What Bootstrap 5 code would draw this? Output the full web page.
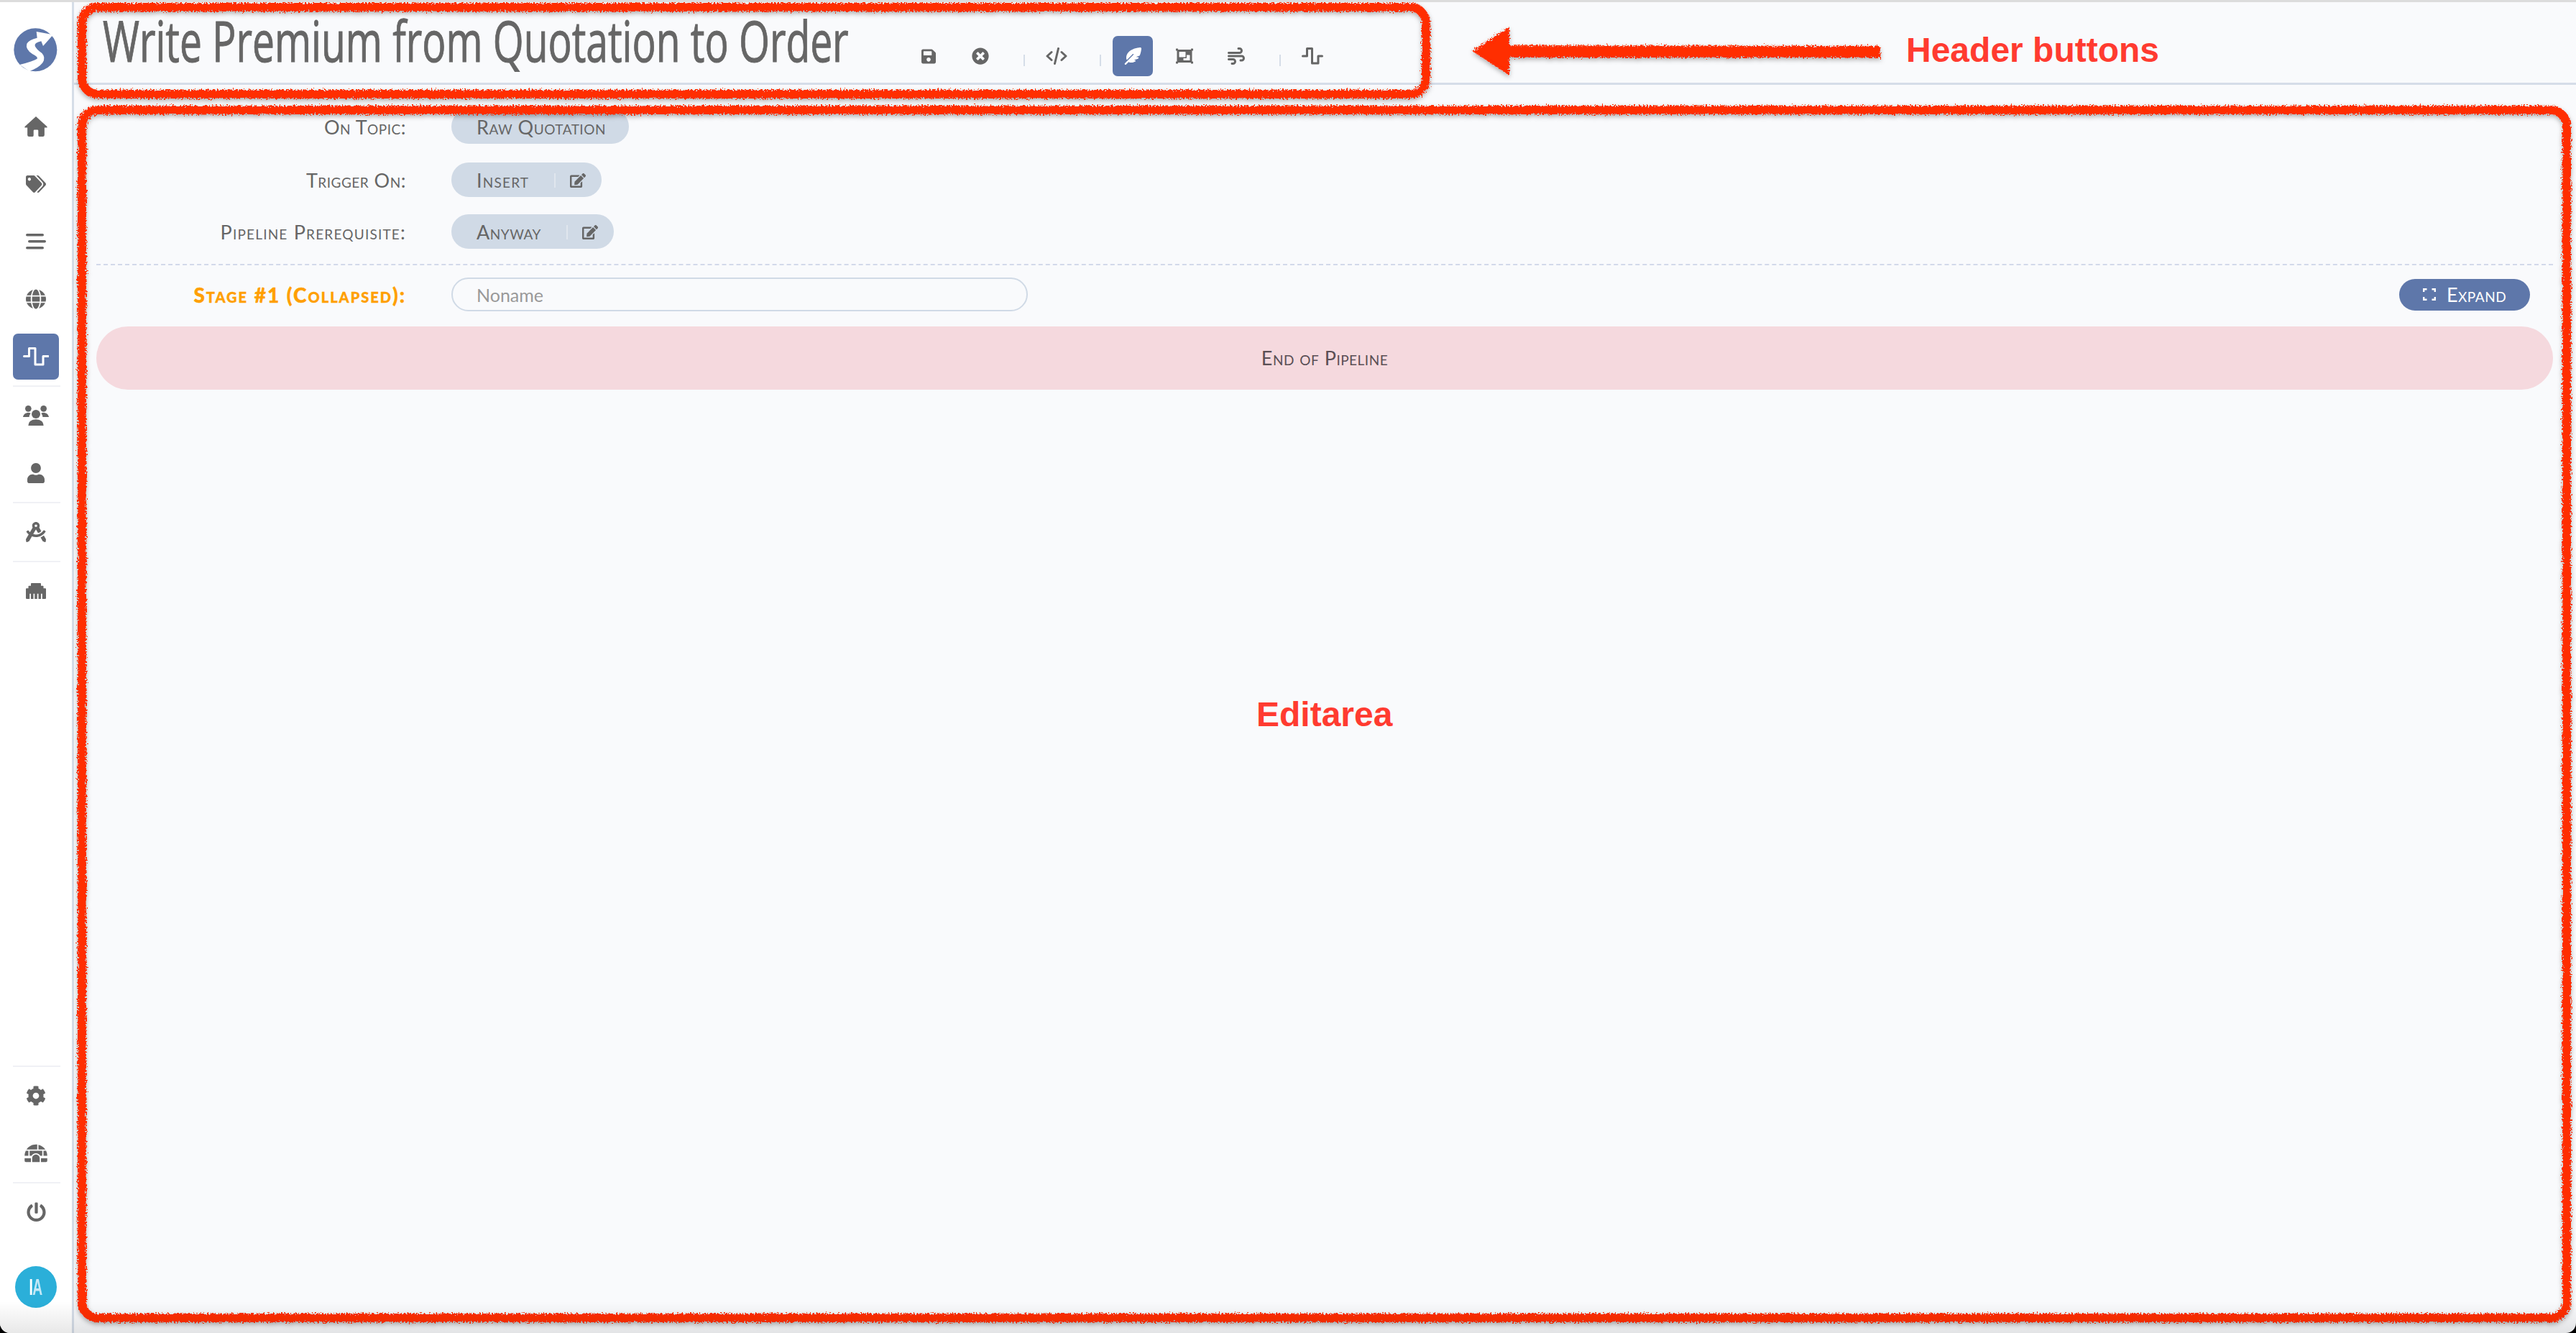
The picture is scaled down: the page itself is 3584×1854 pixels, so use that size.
<!DOCTYPE html>
<html lang="en">
<head>
<meta charset="utf-8">
<title>Write Premium from Quotation to Order</title>
<link href="https://cdn.jsdelivr.net/npm/bootstrap@5.3.0/dist/css/bootstrap.min.css" rel="stylesheet">
<script src="https://cdn.jsdelivr.net/npm/bootstrap@5.3.0/dist/js/bootstrap.bundle.min.js"></script>
<style>
html,body{margin:0;height:1854px;background:#000;overflow:hidden}
.app-shell{position:relative;width:3584px;height:1854px;background:#f9fafc;border-top:3px solid #dcdcdc;border-radius:0 0 14px 14px;overflow:hidden;font-family:"Lato","Liberation Sans",sans-serif;color:#666}
.app-shell::after{content:"";position:absolute;left:0;right:0;bottom:0;height:44px;background:linear-gradient(to bottom,rgba(0,0,0,0),rgba(0,0,0,.09));pointer-events:none}
.side-rail{width:103px;flex:0 0 103px;background:#fff;border-right:3px solid #d5dde8;padding:0 17px 0 18px}
.side-logo{margin:27px 0 34px -8px;display:block}
.side-item{width:64px;height:64px;border-radius:7px;color:#666;flex:0 0 64px}
.side-item.is-on{background:#5e77aa;color:#fff}
.side-gap{margin-bottom:16px}
.side-rule{height:2px;width:66px;background:#f0f1f5;margin:8px 0;flex:0 0 2px}
.side-avatar{width:58px;height:58px;border-radius:50%;background:#2bafd9;margin:43px 0 35px 3px;font-family:"Liberation Sans",sans-serif;font-weight:700;font-size:31px;letter-spacing:-1px;color:#fff;line-height:1}
.ava-text{display:inline-block;transform:scaleX(.62)}
.ava-text span{color:#c4e8f6}
.top-bar{height:115px;border-bottom:3px solid #d5dde8;padding-left:40px;flex:0 0 115px}
.page-title{width:1121px;font-family:"Open Sans","Liberation Sans",sans-serif;font-size:79px;line-height:1;color:#666;margin:0;font-weight:400;white-space:nowrap;padding-top:13px}
.title-text{display:inline-block;transform:scaleX(.698);transform-origin:left center;-webkit-text-stroke:1px #666}
.tool-btn{width:56px;height:56px;border-radius:7px;color:#666;margin:47px 16px 0 0;padding:0;flex:0 0 56px}
.tool-btn.is-on{background:#5e77aa;color:#fff}
.tool-rule{width:2px;height:16px;background:#d5dde8;margin:73px 16px 0 16px;flex:0 0 2px}
.edit-area{padding:34px 32px 0 31px}
.form-line{display:grid;grid-template-columns:431px auto;column-gap:63px;align-items:center;margin-bottom:24px;height:48px;font-variant:small-caps;font-size:27px;letter-spacing:.5px}
.form-line.first-line{margin-bottom:26px}
.form-line label{text-align:right;margin:0;color:#666;padding-top:2px}
.form-line label.wide-label{letter-spacing:1.2px}
.pill-val{height:48px;background:#d0dae6;border-radius:24px;padding:2px 22px 0 35px;justify-self:start;color:#666}
.pill-val.no-edit{padding-right:32px}
.pill-val.wide-val{letter-spacing:1.2px}
.pill-rule{width:2px;height:20px;background:#e0e6ee;margin:0 20px 0 35px}
.dash-line{border-top:2px dashed #d2d9ea;margin-bottom:17px;margin-top:-3px}
.stage-line{display:grid;grid-template-columns:431px 802px 1fr;column-gap:63px;align-items:center;height:47px;margin-bottom:21px}
.stage-line label{text-align:right;font-variant:small-caps;font-weight:900;font-size:28px;letter-spacing:2px;color:#ff9f00;margin:0;-webkit-text-stroke:.4px #ff9f00}
.name-input{height:47px;border:2px solid #d0dae6;border-radius:24px;background:transparent;font-size:25px;padding:0 33px;box-shadow:none;color:#666}
.name-input::placeholder{color:#999}
.expand-btn{justify-self:end;grid-column:3;width:182px;height:44px;margin-right:32px;border:0;border-radius:22px;background:#5e77aa;color:#fff;font-variant:small-caps;font-size:27px;letter-spacing:.5px;padding:0;gap:15px;line-height:1}
.pipe-end{height:88px;border-radius:44px;background:#f5d9de;color:#5a4f55;font-variant:small-caps;font-size:27px;letter-spacing:.5px}
.note-layer{position:absolute;left:0;top:-3px;pointer-events:none}
.note-text{position:absolute;font-family:"Liberation Sans",sans-serif;font-weight:700;font-size:48px;line-height:1;color:#ff3b30;white-space:nowrap}
.note-a{left:2652px;top:43px}
.note-b{left:1748px;top:967px}
</style>
</head>
<body>
<div class="app-shell d-flex">
  <nav class="side-rail d-flex flex-column">
    <svg class="side-logo" width="80" height="80" viewBox="0 0 240 240"><circle cx="118" cy="118" r="90" fill="#5e77aa"/><path fill="#fff" d="M122 42L192 55L150 102L142 82Q112 88 116 102Q122 116 145 132Q162 150 148 172Q130 195 92 207L52 180Q110 165 125 155Q130 148 105 135Q75 115 82 92Q92 75 125 68Z"/></svg>
    <a class="side-item side-gap d-flex align-items-center justify-content-center"><svg width="32" height="28" viewBox="0 0 96 85" fill="currentColor"><path d="M48 0L94 42Q98 47 92 47L84 47L84 78Q84 85 77 85L62 85Q58 85 58 80L58 60Q58 56 54 56L42 56Q38 56 38 60L38 80Q38 85 34 85L19 85Q12 85 12 78L12 47L4 47Q-2 47 2 42Z"/></svg></a>
    <a class="side-item side-gap d-flex align-items-center justify-content-center"><svg width="28" height="24" viewBox="0 0 640 512" preserveAspectRatio="none" fill="currentColor"><path d="M497.941 225.941L286.059 14.059A48 48 0 0 0 252.118 0H48C21.49 0 0 21.49 0 48v204.118a48 48 0 0 0 14.059 33.941l211.882 211.882c18.744 18.745 49.136 18.746 67.882 0l204.118-204.118c18.745-18.745 18.745-49.137 0-67.882zM112 160c-26.51 0-48-21.49-48-48s21.49-48 48-48 48 21.49 48 48-21.49 48-48 48zm513.941 133.823L421.823 497.941c-18.745 18.745-49.137 18.745-67.882 0l-.36-.36L527.64 323.522c16.999-16.999 26.36-39.6 26.36-63.64s-9.362-46.641-26.36-63.64L331.397 0h48.721a48 48 0 0 1 33.941 14.059l211.882 211.882c18.745 18.745 18.745 49.137 0 67.882z"/></svg></a>
    <a class="side-item side-gap d-flex align-items-center justify-content-center"><svg width="28" height="22" viewBox="0 0 28 22" fill="currentColor"><rect x="0" y="0" width="25" height="3.6" rx="1.8"/><rect x="3" y="9" width="25" height="3.6" rx="1.8"/><rect x="0" y="18" width="25" height="3.6" rx="1.8"/></svg></a>
    <a class="side-item side-gap d-flex align-items-center justify-content-center"><svg width="28" height="28" viewBox="0 0 496 512" fill="currentColor" preserveAspectRatio="none"><path d="M336.5 160C322 70.7 287.8 8 248 8s-74 62.7-88.5 152h177zM152 256c0 22.2 1.2 43.5 3.3 64h185.3c2.1-20.5 3.3-41.8 3.3-64s-1.2-43.5-3.3-64H155.3c-2.1 20.5-3.3 41.8-3.3 64zm324.7-96c-28.6-67.9-86.5-120.4-158-141.6 24.4 33.8 41.2 84.7 50 141.6h108zM177.2 18.4C105.8 39.6 47.8 92.1 19.3 160h108c8.7-56.9 25.5-107.8 49.9-141.6zM487.4 192H372.7c2.1 21 3.3 42.5 3.3 64s-1.2 43-3.3 64h114.6c5.5-20.5 8.6-41.8 8.6-64s-3.1-43.5-8.5-64zM120 256c0-21.5 1.2-43 3.3-64H8.6C3.2 212.5 0 233.8 0 256s3.2 43.5 8.6 64h114.6c-2-21-3.2-42.5-3.2-64zm39.5 96c14.5 89.3 48.7 152 88.5 152s74-62.7 88.5-152h-177zm159.3 141.6c71.4-21.2 129.4-73.7 158-141.6h-108c-8.8 56.9-25.6 107.8-50 141.6zM19.3 352c28.6 67.9 86.5 120.4 158 141.6-24.4-33.8-41.2-84.7-50-141.6h-108z"/></svg></a>
    <a class="side-item is-on d-flex align-items-center justify-content-center"><svg width="36" height="26" viewBox="0 0 36 26" fill="none" stroke="currentColor" stroke-width="3" stroke-linecap="round" stroke-linejoin="round"><path d="M1.5 12.5H8.5V1.5H17V24H28V12.5H35"/></svg></a>
    <div class="side-rule"></div>
    <a class="side-item side-gap d-flex align-items-center justify-content-center"><svg width="36" height="28" viewBox="0 0 108 84" fill="currentColor"><circle cx="22" cy="13" r="13"/><circle cx="86" cy="13" r="13"/><circle cx="54" cy="36" r="18"/><path d="M0 48C2 36 12 30 22 30C26 30 30 31 32 33C28 38 26 42 26 48Z"/><path d="M108 48C106 36 96 30 86 30C82 30 78 31 76 33C80 38 82 42 82 48Z"/><path d="M22 84Q22 60 54 58Q86 60 86 84Z"/></svg></a>
    <a class="side-item d-flex align-items-center justify-content-center"><svg width="24" height="28" viewBox="0 0 448 512" preserveAspectRatio="none" fill="currentColor"><path d="M224 256c70.7 0 128-57.3 128-128S294.7 0 224 0 96 57.3 96 128s57.3 128 128 128zm89.6 32h-16.7c-22.2 10.2-46.9 16-72.9 16s-50.6-5.8-72.9-16h-16.7C60.2 288 0 348.2 0 422.4V464c0 26.5 21.5 48 48 48h352c26.5 0 48-21.5 48-48v-41.6c0-74.2-60.2-134.4-134.4-134.4z"/></svg></a>
    <div class="side-rule"></div>
    <a class="side-item d-flex align-items-center justify-content-center"><svg width="28" height="28" viewBox="0 0 512 512" fill="currentColor"><path d="M457.01 344.42c-25.05 20.33-52.63 37.18-82.54 49.05l54.38 94.19 53.95 23.04c9.81 4.19 20.89-2.21 22.17-12.8l7.02-58.25-54.98-95.23zm42.49-94.56c4.86-7.67 1.89-17.99-6.05-22.39l-28.07-15.57c-7.48-4.15-16.61-1.46-21.26 5.72C403.01 281.15 332.25 320 256 320c-23.93 0-47.23-4.25-69.41-11.53l67.36-116.68c.7.02 1.34.21 2.04.21s1.35-.19 2.04-.21l51.09 88.5c31.23-8.96 59.56-25.75 82.61-48.92l-51.79-89.71C347.39 128.03 352 112.63 352 96c0-53.02-42.98-96-96-96s-96 42.98-96 96c0 16.63 4.61 32.03 12.05 45.66l-68.3 118.31c-12.55-11.61-23.96-24.59-33.68-39-4.79-7.1-13.97-9.62-21.38-5.33l-27.75 16.07c-7.85 4.54-10.63 14.9-5.64 22.47 15.57 23.64 34.69 44.21 55.98 62.02L0 439.66l7.02 58.25c1.28 10.59 12.36 16.99 22.17 12.8l53.95-23.04 70.8-122.63C186.13 377.28 220.62 384 256 384c99.05 0 190.88-51.01 243.5-134.14zM256 64c17.67 0 32 14.33 32 32s-14.33 32-32 32-32-14.33-32-32 14.33-32 32-32z"/></svg></a>
    <div class="side-rule"></div>
    <a class="side-item d-flex align-items-center justify-content-center"><svg width="28" height="22" viewBox="0 0 512 384" preserveAspectRatio="none" fill="currentColor"><path transform="translate(0,-64)" d="M496 192h-48v-48c0-8.8-7.2-16-16-16h-48V80c0-8.8-7.2-16-16-16H144c-8.8 0-16 7.2-16 16v48H80c-8.8 0-16 7.2-16 16v48H16c-8.8 0-16 7.2-16 16v224c0 8.8 7.2 16 16 16h80V320h32v128h64V320h32v128h64V320h32v128h64V320h32v128h80c8.8 0 16-7.2 16-16V208c0-8.8-7.2-16-16-16z"/></svg></a>
    <div class="side-rule mt-auto"></div>
    <a class="side-item side-gap d-flex align-items-center justify-content-center"><svg width="28" height="28" viewBox="0 0 512 512" fill="currentColor"><path d="M487.4 315.7l-42.6-24.6c4.3-23.2 4.3-47 0-70.2l42.6-24.6c4.9-2.8 7.1-8.6 5.5-14-11.1-35.6-30-67.8-54.7-94.6-3.8-4.1-10-5.1-14.8-2.3L380.8 110c-17.9-15.4-38.5-27.3-60.8-35.1V25.8c0-5.6-3.9-10.5-9.4-11.7-36.7-8.2-74.3-7.8-109.2 0-5.5 1.2-9.4 6.1-9.4 11.7V75c-22.2 7.9-42.8 19.8-60.8 35.1L88.7 85.5c-4.9-2.8-11-1.9-14.8 2.3-24.7 26.7-43.6 58.9-54.7 94.6-1.7 5.4.6 11.2 5.5 14L67.3 221c-4.3 23.2-4.3 47 0 70.2l-42.6 24.6c-4.9 2.8-7.1 8.6-5.5 14 11.1 35.6 30 67.8 54.7 94.6 3.8 4.1 10 5.1 14.8 2.3l42.6-24.6c17.9 15.4 38.5 27.3 60.8 35.1v49.2c0 5.6 3.9 10.5 9.4 11.7 36.7 8.2 74.3 7.8 109.2 0 5.5-1.2 9.4-6.1 9.4-11.7v-49.2c22.2-7.9 42.8-19.8 60.8-35.1l42.6 24.6c4.9 2.8 11 1.9 14.8-2.3 24.7-26.7 43.6-58.9 54.7-94.6 1.5-5.5-.7-11.3-5.6-14.1zM256 336c-44.1 0-80-35.9-80-80s35.9-80 80-80 80 35.9 80 80-35.9 80-80 80z"/></svg></a>
    <a class="side-item d-flex align-items-center justify-content-center"><svg width="32" height="28" viewBox="0 0 576 512" fill="currentColor"><path d="M320 33.9c-10.5-1.2-21.2-1.9-32-1.9-99.8 0-187.8 50.8-239.4 128H320V33.9zM96 192H30.3C11.1 230.6 0 274 0 320h96V192zM352 39.4V160h175.4C487.2 99.9 424.8 55.9 352 39.4zM480 320h96c0-46-11.1-89.4-30.3-128H480v128zm-64 64v96h128c17.7 0 32-14.3 32-32v-64H416zm32-192H128v128h49.8c22.2-38.1 63-64 110.2-64s88 25.9 110.2 64H448V192zM0 448c0 17.7 14.3 32 32 32h128v-96H0v64zm288-160c-53 0-96 43-96 96v96h192v-96c0-53-43-96-96-96z"/></svg></a>
    <div class="side-rule"></div>
    <a class="side-item d-flex align-items-center justify-content-center"><svg width="27" height="28" viewBox="0 0 512 512" fill="currentColor"><path d="M400 54.1c63 45 104 118.6 104 201.9 0 136.8-110.8 247.7-247.5 248C120 504.3 8.2 393 8 256.4 7.9 173.1 48.9 99.3 111.8 54.2c11.7-8.3 28-4.8 35 7.7L162.6 90c5.9 10.5 3.1 23.8-6.6 31-41.5 30.8-68 79.6-68 134.9-.1 92.3 74.5 168.1 168 168.1 91.6 0 168.6-74.2 168-169.1-.3-51.8-24.7-101.8-68.1-134-9.7-7.2-12.4-20.5-6.5-30.9l15.8-28.1c7-12.4 23.2-16.1 34.8-7.8zM296 264V24c0-13.3-10.7-24-24-24h-32c-13.3 0-24 10.7-24 24v240c0 13.3 10.7 24 24 24h32c13.3 0 24-10.7 24-24z"/></svg></a>
    <div class="side-avatar d-flex align-items-center justify-content-center"><span class="ava-text">I<span>A</span></span></div>
  </nav>
  <main class="flex-grow-1 d-flex flex-column">
    <header class="top-bar d-flex">
      <h1 class="page-title"><span class="title-text">Write Premium from Quotation to Order</span></h1>
      <a class="tool-btn d-flex align-items-center justify-content-center"><svg width="20" height="23" viewBox="0 0 448 512" fill="currentColor"><path d="M433.941 129.941l-83.882-83.882A48 48 0 0 0 316.118 32H48C21.49 32 0 53.49 0 80v352c0 26.51 21.49 48 48 48h352c26.51 0 48-21.49 48-48V163.882a48 48 0 0 0-14.059-33.941zM224 416c-35.346 0-64-28.654-64-64 0-35.346 28.654-64 64-64s64 28.654 64 64c0 35.346-28.654 64-64 64zm96-304.52V212c0 6.627-5.373 12-12 12H76c-6.627 0-12-5.373-12-12V108c0-6.627 5.373-12 12-12h228.52c3.183 0 6.235 1.264 8.485 3.515l3.48 3.48A11.996 11.996 0 0 1 320 111.48z"/></svg></a>
      <a class="tool-btn d-flex align-items-center justify-content-center"><svg width="24" height="24" viewBox="0 0 512 512" fill="currentColor"><path d="M256 8C119 8 8 119 8 256s111 248 248 248 248-111 248-248S393 8 256 8zm121.6 313.1c4.7 4.7 4.7 12.3 0 17L338 377.6c-4.7 4.7-12.3 4.7-17 0L256 312l-65.1 65.6c-4.7 4.7-12.3 4.7-17 0L134.4 338c-4.7-4.7-4.7-12.3 0-17l65.6-65-65.6-65.1c-4.7-4.7-4.7-12.3 0-17l39.6-39.6c4.7-4.7 12.3-4.7 17 0l65 65.7 65.1-65.6c4.7-4.7 12.3-4.7 17 0l39.6 39.6c4.7 4.7 4.7 12.3 0 17L312 256l65.6 65.1z"/></svg></a>
      <span class="tool-rule ms-3"></span>
      <a class="tool-btn d-flex align-items-center justify-content-center"><svg width="30" height="24" viewBox="0 0 30 24" fill="none" stroke="currentColor" stroke-width="3" stroke-linecap="round" stroke-linejoin="round"><path d="M8 6.5L2 12L8 17.5M22 6.5L28 12L22 17.5M17.5 1.5L12.5 22.5"/></svg></a>
      <span class="tool-rule ms-3"></span>
      <a class="tool-btn is-on d-flex align-items-center justify-content-center"><svg width="24" height="24" viewBox="0 0 512 512" fill="currentColor"><path d="M278.5 215.6L23 471c-9.4 9.4-9.4 24.6 0 33.9s24.6 9.4 33.9 0l74.8-74.8c7.4 4.6 15.3 8.2 23.8 10.5C200.3 452.8 270 454.5 338 409.4c12.2-8.1 5.8-25.4-8.8-25.4l-16.1 0c-5.1 0-9.2-4.1-9.2-9.2c0-4.1 2.7-7.6 6.5-8.8l97.7-29.3c3.4-1 6.4-3.1 8.4-6.1c4.4-6.4 8.6-12.9 12.6-19.6c6.2-10.3-1.5-23-13.5-23l-38.6 0c-5.1 0-9.2-4.1-9.2-9.2c0-4.1 2.7-7.6 6.5-8.8l80.9-24.3c4.6-1.4 8.4-4.8 10.2-9.3C494.5 163 507.8 86.1 511.9 36.8c.8-9.9-3-19.6-10-26.6s-16.7-10.8-26.6-10C391.5 7 228.5 40.5 137.4 131.6C57.3 211.7 56.7 302.3 71.3 356.4c2.1 7.9 12 9.6 17.8 3.8L253.6 195.8c6.2-6.2 16.4-6.2 22.6 0c5.2 5.2 6.1 13.2 2.3 19.3z"/></svg></a>
      <a class="tool-btn d-flex align-items-center justify-content-center"><svg width="24" height="24" viewBox="0 0 512 512" fill="currentColor"><path d="M480 128V96h20c6.627 0 12-5.373 12-12V44c0-6.627-5.373-12-12-12H460c-6.627 0-12 5.373-12 12v20H64V44c0-6.627-5.373-12-12-12H12C5.373 32 0 37.373 0 44v40c0 6.627 5.373 12 12 12h20v320H12c-6.627 0-12 5.373-12 12v40c0 6.627 5.373 12 12 12h40c6.627 0 12-5.373 12-12v-20h384v20c0 6.627 5.373 12 12 12h40c6.627 0 12-5.373 12-12v-40c0-6.627-5.373-12-12-12h-20V128zM96 276V140c0-6.627 5.373-12 12-12h168c6.627 0 12 5.373 12 12v136c0 6.627-5.373 12-12 12H108c-6.627 0-12-5.373-12-12zm320 96c0 6.627-5.373 12-12 12H236c-6.627 0-12-5.373-12-12v-52h72c13.255 0 24-10.745 24-24v-72h84c6.627 0 12 5.373 12 12v136z"/></svg></a>
      <a class="tool-btn d-flex align-items-center justify-content-center"><svg width="24" height="24" viewBox="0 0 512 512" fill="currentColor"><path d="M288 32c0 17.7 14.3 32 32 32h32c17.7 0 32 14.3 32 32s-14.3 32-32 32H32c-17.7 0-32 14.3-32 32s14.3 32 32 32H352c53 0 96-43 96-96s-43-96-96-96H320c-17.7 0-32 14.3-32 32zm64 352c0 17.7 14.3 32 32 32h32c53 0 96-43 96-96s-43-96-96-96H32c-17.7 0-32 14.3-32 32s14.3 32 32 32H416c17.7 0 32 14.3 32 32s-14.3 32-32 32H384c-17.7 0-32 14.3-32 32zM128 512h32c53 0 96-43 96-96s-43-96-96-96H32c-17.7 0-32 14.3-32 32s14.3 32 32 32H160c17.7 0 32 14.3 32 32s-14.3 32-32 32H128c-17.7 0-32 14.3-32 32s14.3 32 32 32z"/></svg></a>
      <span class="tool-rule ms-3"></span>
      <a class="tool-btn d-flex align-items-center justify-content-center"><svg width="30" height="24" viewBox="0 0 30 24" fill="none" stroke="currentColor" stroke-width="3" stroke-linecap="round" stroke-linejoin="round"><path d="M1.5 12H7.5V1.5H14.5V22H23V12H28.5"/></svg></a>
    </header>
    <section class="edit-area flex-grow-1">
      <div class="form-line first-line"><label>On Topic:</label><div class="pill-val no-edit d-flex align-items-center">Raw Quotation</div></div>
      <div class="form-line"><label>Trigger On:</label><div class="pill-val wide-val d-flex align-items-center">Insert<span class="pill-rule"></span><svg width="22" height="20" viewBox="0 0 576 512" preserveAspectRatio="none" fill="currentColor"><path d="M402.6 83.2l90.2 90.2c3.8 3.8 3.8 10 0 13.8L274.4 405.6l-92.8 10.3c-12.4 1.4-22.9-9.1-21.5-21.5l10.3-92.8L388.8 83.2c3.8-3.8 10-3.8 13.8 0zm162-22.9l-48.8-48.8c-15.2-15.2-39.9-15.2-55.2 0l-35.4 35.4c-3.8 3.8-3.8 10 0 13.8l90.2 90.2c3.8 3.8 10 3.8 13.8 0l35.4-35.4c15.2-15.3 15.2-40 0-55.2zM384 346.2V448H64V128h229.8c3.2 0 6.2-1.3 8.5-3.5l40-40c7.6-7.6 2.2-20.5-8.5-20.5H48C21.5 64 0 85.5 0 112v352c0 26.5 21.5 48 48 48h352c26.5 0 48-21.5 48-48V306.2c0-10.7-12.9-16-20.5-8.5l-40 40c-2.2 2.3-3.5 5.3-3.5 8.5z"/></svg></div></div>
      <div class="form-line"><label class="wide-label">Pipeline Prerequisite:</label><div class="pill-val d-flex align-items-center">Anyway<span class="pill-rule"></span><svg width="22" height="20" viewBox="0 0 576 512" preserveAspectRatio="none" fill="currentColor"><path d="M402.6 83.2l90.2 90.2c3.8 3.8 3.8 10 0 13.8L274.4 405.6l-92.8 10.3c-12.4 1.4-22.9-9.1-21.5-21.5l10.3-92.8L388.8 83.2c3.8-3.8 10-3.8 13.8 0zm162-22.9l-48.8-48.8c-15.2-15.2-39.9-15.2-55.2 0l-35.4 35.4c-3.8 3.8-3.8 10 0 13.8l90.2 90.2c3.8 3.8 10 3.8 13.8 0l35.4-35.4c15.2-15.3 15.2-40 0-55.2zM384 346.2V448H64V128h229.8c3.2 0 6.2-1.3 8.5-3.5l40-40c7.6-7.6 2.2-20.5-8.5-20.5H48C21.5 64 0 85.5 0 112v352c0 26.5 21.5 48 48 48h352c26.5 0 48-21.5 48-48V306.2c0-10.7-12.9-16-20.5-8.5l-40 40c-2.2 2.3-3.5 5.3-3.5 8.5z"/></svg></div></div>
      <div class="dash-line"></div>
      <div class="stage-line"><label>Stage #1 (Collapsed):</label><input class="form-control name-input" type="text" placeholder="Noname"><button class="expand-btn d-flex align-items-center justify-content-center" type="button"><svg width="18" height="17" viewBox="0 0 18 17" fill="none" stroke="currentColor" stroke-width="2.4"><path d="M1.2 5V1.2H5.5M12.5 1.2H16.8V5M16.8 12V15.8H12.5M5.5 15.8H1.2V12"/></svg>Expand</button></div>
      <div class="pipe-end d-flex align-items-center justify-content-center">End of Pipeline</div>
    </section>
  </main>
  <svg class="note-layer" width="3584" height="1854" viewBox="0 0 3584 1854">
    <defs><filter id="rough" x="-5%" y="-5%" width="110%" height="110%" filterUnits="objectBoundingBox"><feTurbulence type="fractalNoise" baseFrequency="0.45" numOctaves="2" seed="4" result="n"/><feDisplacementMap in="SourceGraphic" in2="n" scale="9" result="d"/><feDropShadow in="d" dx="0" dy="3" stdDeviation="3" flood-color="#000" flood-opacity=".3"/></filter></defs>
    <g fill="none" stroke="#ff2d00" stroke-width="12" filter="url(#rough)">
      <rect x="114" y="10" width="1870" height="121" rx="22"/>
      <rect x="114" y="153" width="3457" height="1680" rx="22"/>
      <path fill="#ff2d00" stroke-width="4" d="M2052 71L2098 41L2098 65L2614 66L2614 78L2098 78L2098 101Z"/>
    </g>
  </svg>
  <div class="note-text note-a">Header buttons</div>
  <div class="note-text note-b">Editarea</div>
</div>
</body>
</html>
